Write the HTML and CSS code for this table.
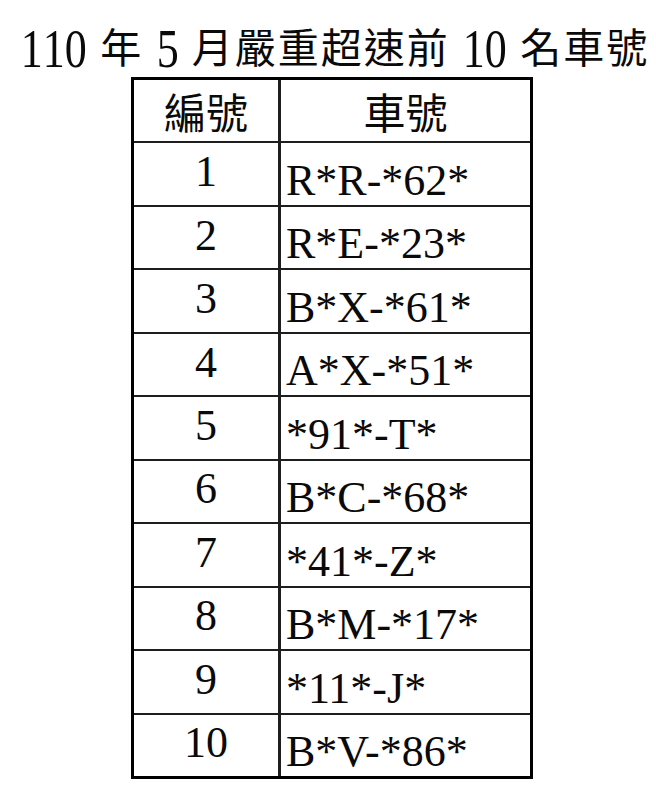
FILE: index.html
```html
<!DOCTYPE html>
<html lang="zh-Hant">
<head>
<meta charset="utf-8">
<title>110 年 5 月嚴重超速前 10 名車號</title>
<link rel="stylesheet" href="styles.css">
</head>
<body>
<h1 class="title"><span class="d">1</span><span class="d">1</span><span class="d">0</span> 年 <span class="d">5</span> 月嚴重超速前 <span class="d">1</span><span class="d">0</span> 名車號</h1>
<div class="grid">
  <div class="c h">編號</div><div class="c h">車號</div>
  <div class="c">1</div><div class="c v">R*R-*62*</div>
  <div class="c">2</div><div class="c v">R*E-*23*</div>
  <div class="c">3</div><div class="c v">B*X-*61*</div>
  <div class="c">4</div><div class="c v">A*X-*51*</div>
  <div class="c">5</div><div class="c v">*91*-T*</div>
  <div class="c">6</div><div class="c v">B*C-*68*</div>
  <div class="c">7</div><div class="c v">*41*-Z*</div>
  <div class="c">8</div><div class="c v">B*M-*17*</div>
  <div class="c">9</div><div class="c v">*11*-J*</div>
  <div class="c">10</div><div class="c v">B*V-*86*</div>
</div>
</body>
</html>
```
FILE: styles.css
```css
html, body {
  margin: 0;
  padding: 0;
  background: #fff;
}
body {
  width: 656px;
  height: 809px;
  color: #0a0a0a;
}
.title {
  margin: 0;
  padding: 25px 0 4px 21px;
  font-family: "Liberation Serif", "Noto Sans CJK TC", serif;
  font-size: 41px;
  font-weight: 400;
  line-height: 48px;
  letter-spacing: 2px;
  word-spacing: 1px;
  white-space: nowrap;
}
.d {
  display: inline-block;
  font-size: 55px;
  line-height: 40px;
  letter-spacing: 0;
  margin: 0 -2.75px;
  transform: scaleX(0.8);
  vertical-align: -4px;
}
.grid {
  margin-left: 131px;
  width: 402px;
  height: 702px;
  box-sizing: border-box;
  border: 3px solid #000;
  display: grid;
  grid-template-columns: 144px 249px;
  grid-template-rows: repeat(11, 1fr);
  column-gap: 3px;
  row-gap: 2px;
  background: #1e1e1e;
}
.c {
  background: #fff;
  display: flex;
  align-items: center;
  justify-content: center;
  font-family: "Liberation Serif", "Noto Sans CJK TC", serif;
  font-size: 44px;
  line-height: 1;
  padding-bottom: 4px;
  min-width: 0;
  min-height: 0;
}
.v {
  justify-content: flex-start;
  align-items: flex-end;
  padding: 0 0 2px 5px;
}
.h {
  font-family: "Noto Sans CJK TC", sans-serif;
  font-size: 42px;
  padding-bottom: 0;
}
```
